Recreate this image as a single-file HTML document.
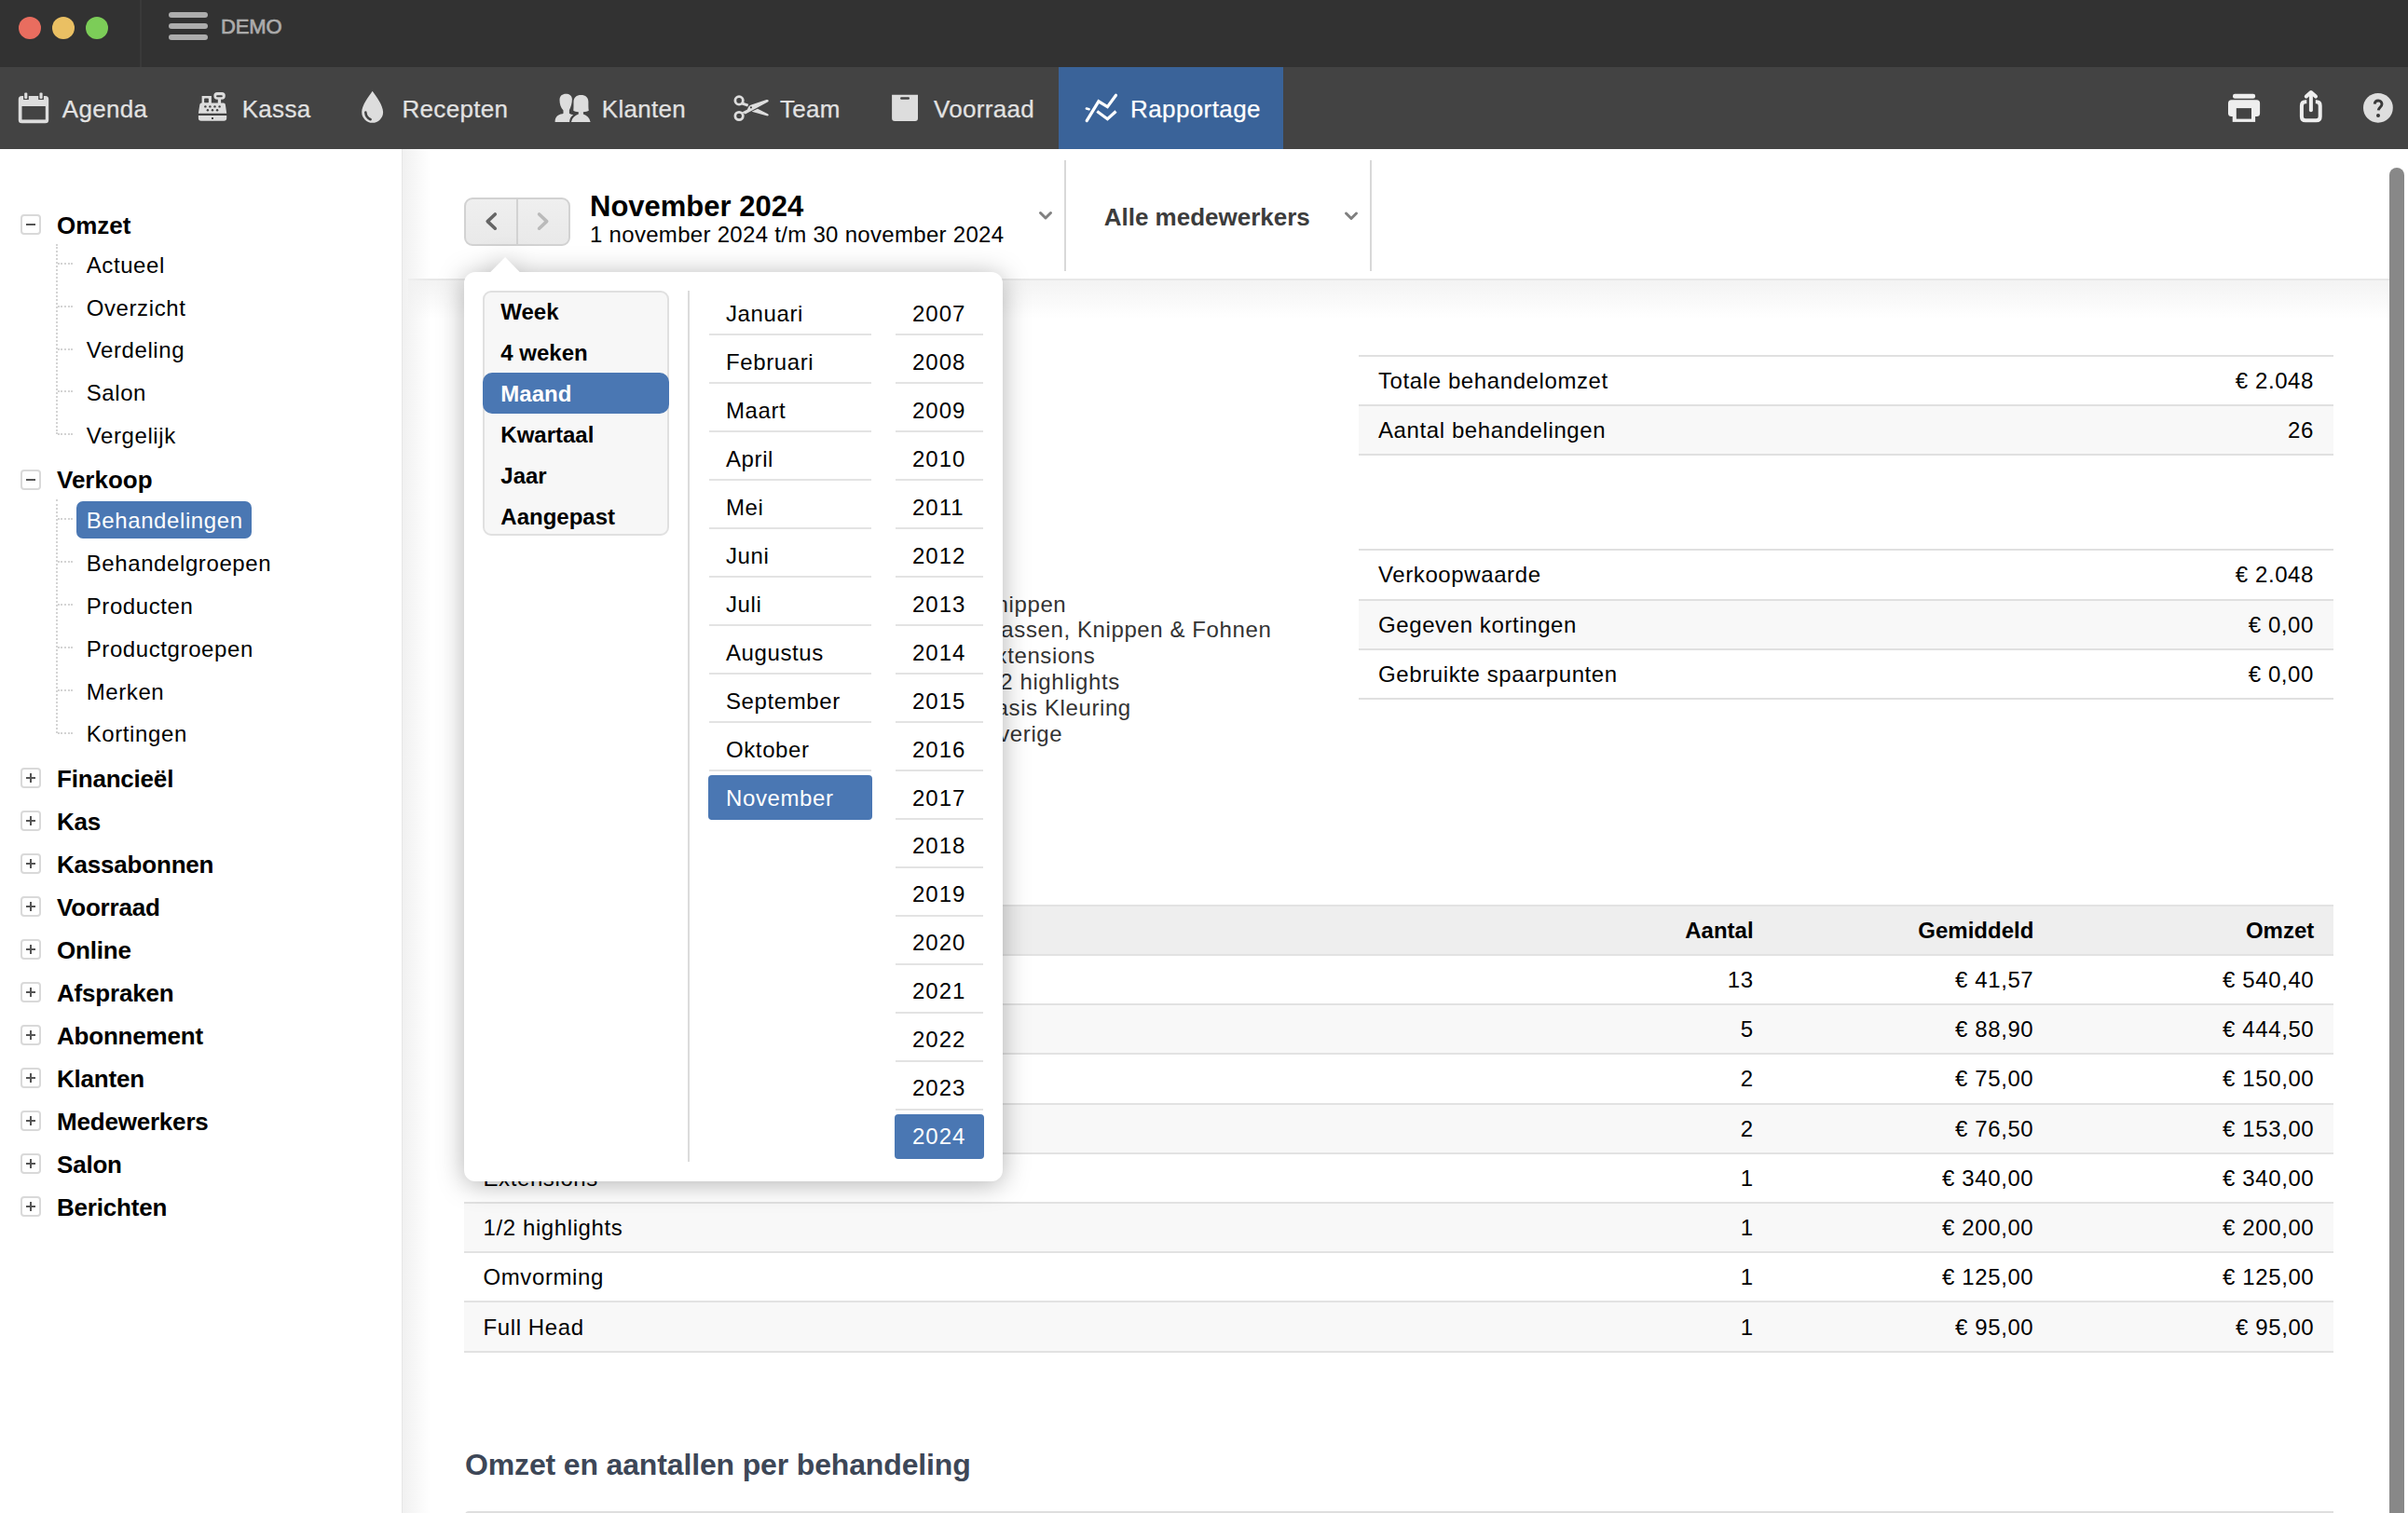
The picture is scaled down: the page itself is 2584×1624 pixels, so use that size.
<!DOCTYPE html><html><head><meta charset="utf-8"><style>
html,body{margin:0;padding:0;}
body{width:2584px;height:1624px;overflow:hidden;position:relative;background:#fff;font-family:"Liberation Sans", sans-serif;}
.t{position:absolute;white-space:nowrap;line-height:1;}
svg{position:absolute;}
</style></head><body>
<div style="position:absolute;left:0px;top:0px;width:2584px;height:72px;background:#323232;"></div>
<div style="position:absolute;left:20px;top:18px;width:24px;height:24px;background:#e96d5f;border-radius:50%;"></div>
<div style="position:absolute;left:56px;top:18px;width:24px;height:24px;background:#eac063;border-radius:50%;"></div>
<div style="position:absolute;left:92px;top:18px;width:24px;height:24px;background:#7ccd58;border-radius:50%;"></div>
<div style="position:absolute;left:150px;top:0px;width:2px;height:72px;background:#3a3a3a;"></div>
<div style="position:absolute;left:181px;top:12.9px;width:42px;height:6.2px;background:#adadad;border-radius:3.1px;"></div>
<div style="position:absolute;left:181px;top:24.9px;width:42px;height:6.2px;background:#adadad;border-radius:3.1px;"></div>
<div style="position:absolute;left:181px;top:37px;width:42px;height:6.2px;background:#adadad;border-radius:3.1px;"></div>
<div class="t" style="left:237.0px;top:17.7px;font-size:22px;font-weight:400;color:#acacac;-webkit-text-stroke:0.7px #acacac;letter-spacing:-0.1px;">DEMO</div>
<div style="position:absolute;left:0px;top:72px;width:2584px;height:88px;background:#434343;"></div>
<div style="position:absolute;left:1136px;top:72px;width:241px;height:88px;background:#3a6399;"></div>
<div class="t" style="left:66.8px;top:103.6px;font-size:26px;font-weight:400;color:#e2e2e2;letter-spacing:0.3px;-webkit-text-stroke:0.25px #e2e2e2;">Agenda</div>
<div class="t" style="left:259.7px;top:103.6px;font-size:26px;font-weight:400;color:#e2e2e2;letter-spacing:0.3px;-webkit-text-stroke:0.25px #e2e2e2;">Kassa</div>
<div class="t" style="left:431.5px;top:103.6px;font-size:26px;font-weight:400;color:#e2e2e2;letter-spacing:0.3px;-webkit-text-stroke:0.25px #e2e2e2;">Recepten</div>
<div class="t" style="left:645.8px;top:103.6px;font-size:26px;font-weight:400;color:#e2e2e2;letter-spacing:0.3px;-webkit-text-stroke:0.25px #e2e2e2;">Klanten</div>
<div class="t" style="left:837.0px;top:103.6px;font-size:26px;font-weight:400;color:#e2e2e2;letter-spacing:0.3px;-webkit-text-stroke:0.25px #e2e2e2;">Team</div>
<div class="t" style="left:1002.0px;top:103.6px;font-size:26px;font-weight:400;color:#e2e2e2;letter-spacing:0.3px;-webkit-text-stroke:0.25px #e2e2e2;">Voorraad</div>
<div class="t" style="left:1213.0px;top:103.6px;font-size:26px;font-weight:400;color:#fff;letter-spacing:0.4px;-webkit-text-stroke:0.25px #fff;">Rapportage</div>
<svg style="left:0;top:0;" width="2584" height="160" viewBox="0 0 2584 160">
<!-- calendar -->
<rect x="19.8" y="103" width="32.4" height="29.2" rx="3.5" fill="#dddddd"/>
<rect x="25.1" y="101" width="5.7" height="6" fill="#434343"/>
<rect x="41.2" y="101" width="5.7" height="6" fill="#434343"/>
<rect x="26.2" y="99.6" width="3.1" height="6.4" rx="1" fill="#dddddd"/>
<rect x="42.5" y="99.6" width="3.1" height="6.4" rx="1" fill="#dddddd"/>
<rect x="23.5" y="114" width="25.3" height="14.4" fill="#434343"/>
<!-- kassa -->
<rect x="229.4" y="99" width="12.4" height="7.7" rx="3.6" fill="#dddddd"/>
<rect x="232.1" y="102.2" width="6.7" height="2" rx="1" fill="#434343"/>
<rect x="233.8" y="106" width="3.3" height="5" fill="#dddddd"/>
<rect x="216.6" y="103" width="10.3" height="8" fill="#dddddd"/>
<rect x="219.1" y="105.6" width="4.8" height="5" rx="0.8" fill="#434343"/>
<path d="M216.3,110.4 L239.8,110.4 Q241.8,110.4 241.9,112.4 L243.2,121.8 L212.9,121.8 L214.3,112.4 Q214.5,110.4 216.3,110.4 Z" fill="#dddddd"/>
<g fill="#434343">
<circle cx="220.4" cy="114.4" r="1.2"/><circle cx="225.4" cy="114.4" r="1.2"/><circle cx="230.5" cy="114.4" r="1.2"/><circle cx="235.6" cy="114.4" r="1.2"/>
<circle cx="222.9" cy="118.2" r="1.2"/><circle cx="228" cy="118.2" r="1.2"/><circle cx="233.1" cy="118.2" r="1.2"/>
</g>
<path d="M212.9,124.1 L243.2,124.1 L243.2,126.7 Q243.2,129.7 240.2,129.7 L215.9,129.7 Q212.9,129.7 212.9,126.7 Z" fill="#dddddd"/>
<rect x="227" y="126" width="2" height="2" fill="#434343"/>
<!-- drop -->
<path d="M399.7,97.8 C396,103 388.2,113 388.2,120.3 A11.45,11.45 0 0 0 411.1,120.3 C411.1,113 403.4,103 399.7,97.8 Z" fill="#dddddd"/>
<path d="M392.3,120.6 Q392.8,126 397.6,128.2" stroke="#434343" stroke-width="2.6" fill="none" stroke-linecap="round"/>
<!-- klanten -->
<path d="M595.6,130.9 C595.6,126 598,123 603.5,122.3 L604.5,121.8 L604.5,118.5 C601.5,115.5 600.5,111 600.5,107.2 C600.5,102.8 603.5,100.7 607.2,100.7 C611,100.7 613.9,102.6 613.9,106.6 C613.9,111 612.6,115 610.9,118.2 L610.9,121.8 C612.2,122.6 613.5,123 615.2,123.3 C612.6,125 611.1,128 611.1,130.9 Z" fill="#dddddd"/>
<path d="M613,130.9 C614,126.5 617,124 620.8,122.6 L620.8,120.3 C618.5,120 616.2,119.5 615.3,118.8 C615.6,116 615.5,112 615.5,109.2 C615.5,104.6 618.6,101.9 623.5,101.9 C628.4,101.9 631.4,104.6 631.4,109.2 C631.4,112 631.3,116 631.8,118.8 C630.8,119.5 628.2,120 625.9,120.3 L625.9,122.6 C629.8,124 632.6,126.5 633.6,130.9 Z" fill="#dddddd"/>
<!-- scissors -->
<g transform="translate(782,96)">
<circle cx="11.1" cy="11.9" r="4.2" stroke="#dddddd" stroke-width="2.8" fill="none"/>
<circle cx="11.1" cy="28.5" r="4.2" stroke="#dddddd" stroke-width="2.8" fill="none"/>
<path d="M14.2,24.5 L20,21.5 C21,19 21.5,17.6 23.5,16.8 L40.5,11 C42.8,10.4 43.6,12.7 41.8,13.6 L17.8,26.6 Z" fill="#dddddd"/>
<path d="M14.6,13.6 L21.2,15.8 L20.2,18.6 L14,16.4 Z" fill="#dddddd"/>
<path d="M24.6,23.7 L31,20.8 L42,26.2 C43.6,27.1 42.6,29 40.6,28.3 Z" fill="#dddddd"/>
<circle cx="23.9" cy="19.3" r="1.1" fill="#434343"/>
</g>
<!-- voorraad -->
<path d="M957.1,101.8 L985,101.8 L985,127 Q985,130 982,130 L960.1,130 Q957.1,130 957.1,127 Z" fill="#dddddd"/>
<rect x="966.1" y="104.3" width="9.9" height="2.5" rx="1.25" fill="#434343"/>
<!-- chart -->
<g stroke="#fff" stroke-width="3.2" fill="none" stroke-linecap="round" stroke-linejoin="miter">
<path d="M1166.2,129.6 L1178.9,108.8 L1188.4,114.6 L1197.5,102.3"/>
<path d="M1177.3,119.5 L1188.4,127.7 L1197.5,119.5" stroke-linecap="butt"/>
<path d="M1165.9,116.6 L1168.6,117.2" stroke-width="2.6"/>
</g>
<!-- print -->
<g fill="#eeeeee">
<rect x="2396" y="100.8" width="24.1" height="5" rx="2.2"/>
<rect x="2391" y="107.3" width="34.1" height="17.7" rx="3.5"/>
<rect x="2395.7" y="115.9" width="24.4" height="15"/>
</g>
<rect x="2399.8" y="116.1" width="16.2" height="11.5" fill="#434343"/>
<!-- share -->
<g stroke="#eeeeee" stroke-width="4" fill="none">
<path d="M2475.3,109.3 L2474,109.3 Q2469.9,109.3 2469.9,113.4 L2469.9,125.2 Q2469.9,129.2 2474,129.2 L2485.6,129.2 Q2489.7,129.2 2489.7,125.2 L2489.7,113.4 Q2489.7,109.3 2485.6,109.3 L2484.8,109.3"/>
<path d="M2479.9,118.3 L2479.9,100" stroke-linecap="round"/>
<path d="M2474.8,103.6 L2479.9,99 L2485,103.6" stroke-linecap="round" stroke-linejoin="round"/>
</g>
<!-- help -->
<circle cx="2551.9" cy="115.8" r="15.9" fill="#dedede"/>
<path d="M2548.2,111.6 C2548.5,109.2 2550,108 2552.1,108 C2554.4,108 2556,109.7 2556,111.8 C2556,114.6 2552.6,115.4 2552.2,118.4" stroke="#3a3a3a" stroke-width="2.9" fill="none"/>
<circle cx="2552" cy="124" r="2" fill="#3a3a3a"/>
</svg>
<div style="position:absolute;left:0px;top:160px;width:431px;height:1464px;background:#fff;"></div>
<div style="position:absolute;left:22px;top:230px;width:18px;height:18px;border:2px solid #d9d9d9;border-radius:4px;background:#fff;"></div>
<div style="position:absolute;left:28px;top:240px;width:10px;height:2px;background:#555;"></div>
<div class="t" style="left:61.0px;top:229.0px;font-size:26px;font-weight:700;color:#000;">Omzet</div>
<div class="t" style="left:92.7px;top:272.7px;font-size:24px;font-weight:400;color:#000;letter-spacing:0.6px;">Actueel</div>
<div style="position:absolute;left:62px;top:282px;width:16px;height:0;border-top:2px dotted #d4d4d4;"></div>
<div class="t" style="left:92.7px;top:318.5px;font-size:24px;font-weight:400;color:#000;letter-spacing:0.6px;">Overzicht</div>
<div style="position:absolute;left:62px;top:327.8px;width:16px;height:0;border-top:2px dotted #d4d4d4;"></div>
<div class="t" style="left:92.7px;top:364.3px;font-size:24px;font-weight:400;color:#000;letter-spacing:0.6px;">Verdeling</div>
<div style="position:absolute;left:62px;top:373.6px;width:16px;height:0;border-top:2px dotted #d4d4d4;"></div>
<div class="t" style="left:92.7px;top:410.1px;font-size:24px;font-weight:400;color:#000;letter-spacing:0.6px;">Salon</div>
<div style="position:absolute;left:62px;top:419.4px;width:16px;height:0;border-top:2px dotted #d4d4d4;"></div>
<div class="t" style="left:92.7px;top:455.9px;font-size:24px;font-weight:400;color:#000;letter-spacing:0.6px;">Vergelijk</div>
<div style="position:absolute;left:62px;top:465.2px;width:16px;height:0;border-top:2px dotted #d4d4d4;"></div>
<div style="position:absolute;left:60px;top:262px;width:0;height:204.2px;border-left:2px dotted #d4d4d4;"></div>
<div style="position:absolute;left:22px;top:504px;width:18px;height:18px;border:2px solid #d9d9d9;border-radius:4px;background:#fff;"></div>
<div style="position:absolute;left:28px;top:514px;width:10px;height:2px;background:#555;"></div>
<div class="t" style="left:61.0px;top:502.0px;font-size:26px;font-weight:700;color:#000;">Verkoop</div>
<div style="position:absolute;left:82px;top:538px;width:188px;height:40px;background:#4a77b3;border-radius:7px;"></div>
<div class="t" style="left:92.7px;top:546.5px;font-size:24px;font-weight:400;color:#fff;letter-spacing:0.6px;">Behandelingen</div>
<div style="position:absolute;left:62px;top:555.8px;width:16px;height:0;border-top:2px dotted #d4d4d4;"></div>
<div class="t" style="left:92.7px;top:592.5px;font-size:24px;font-weight:400;color:#000;letter-spacing:0.6px;">Behandelgroepen</div>
<div style="position:absolute;left:62px;top:601.8px;width:16px;height:0;border-top:2px dotted #d4d4d4;"></div>
<div class="t" style="left:92.7px;top:638.5px;font-size:24px;font-weight:400;color:#000;letter-spacing:0.6px;">Producten</div>
<div style="position:absolute;left:62px;top:647.8px;width:16px;height:0;border-top:2px dotted #d4d4d4;"></div>
<div class="t" style="left:92.7px;top:684.5px;font-size:24px;font-weight:400;color:#000;letter-spacing:0.6px;">Productgroepen</div>
<div style="position:absolute;left:62px;top:693.8px;width:16px;height:0;border-top:2px dotted #d4d4d4;"></div>
<div class="t" style="left:92.7px;top:730.5px;font-size:24px;font-weight:400;color:#000;letter-spacing:0.6px;">Merken</div>
<div style="position:absolute;left:62px;top:739.8px;width:16px;height:0;border-top:2px dotted #d4d4d4;"></div>
<div class="t" style="left:92.7px;top:776.4px;font-size:24px;font-weight:400;color:#000;letter-spacing:0.6px;">Kortingen</div>
<div style="position:absolute;left:62px;top:785.7px;width:16px;height:0;border-top:2px dotted #d4d4d4;"></div>
<div style="position:absolute;left:60px;top:536px;width:0;height:250.70000000000005px;border-left:2px dotted #d4d4d4;"></div>
<div style="position:absolute;left:22px;top:824px;width:18px;height:18px;border:2px solid #d9d9d9;border-radius:4px;background:#fff;"></div>
<div style="position:absolute;left:28px;top:834px;width:10px;height:2px;background:#555;"></div>
<div style="position:absolute;left:32px;top:830px;width:2px;height:10px;background:#555;"></div>
<div class="t" style="left:61.0px;top:822.6px;font-size:26px;font-weight:700;color:#000;letter-spacing:-0.2px;">Financieël</div>
<div style="position:absolute;left:22px;top:870px;width:18px;height:18px;border:2px solid #d9d9d9;border-radius:4px;background:#fff;"></div>
<div style="position:absolute;left:28px;top:880px;width:10px;height:2px;background:#555;"></div>
<div style="position:absolute;left:32px;top:876px;width:2px;height:10px;background:#555;"></div>
<div class="t" style="left:61.0px;top:868.6px;font-size:26px;font-weight:700;color:#000;letter-spacing:-0.2px;">Kas</div>
<div style="position:absolute;left:22px;top:916px;width:18px;height:18px;border:2px solid #d9d9d9;border-radius:4px;background:#fff;"></div>
<div style="position:absolute;left:28px;top:926px;width:10px;height:2px;background:#555;"></div>
<div style="position:absolute;left:32px;top:922px;width:2px;height:10px;background:#555;"></div>
<div class="t" style="left:61.0px;top:914.7px;font-size:26px;font-weight:700;color:#000;letter-spacing:-0.2px;">Kassabonnen</div>
<div style="position:absolute;left:22px;top:962px;width:18px;height:18px;border:2px solid #d9d9d9;border-radius:4px;background:#fff;"></div>
<div style="position:absolute;left:28px;top:972px;width:10px;height:2px;background:#555;"></div>
<div style="position:absolute;left:32px;top:968px;width:2px;height:10px;background:#555;"></div>
<div class="t" style="left:61.0px;top:960.7px;font-size:26px;font-weight:700;color:#000;letter-spacing:-0.2px;">Voorraad</div>
<div style="position:absolute;left:22px;top:1008px;width:18px;height:18px;border:2px solid #d9d9d9;border-radius:4px;background:#fff;"></div>
<div style="position:absolute;left:28px;top:1018px;width:10px;height:2px;background:#555;"></div>
<div style="position:absolute;left:32px;top:1014px;width:2px;height:10px;background:#555;"></div>
<div class="t" style="left:61.0px;top:1006.8px;font-size:26px;font-weight:700;color:#000;letter-spacing:-0.2px;">Online</div>
<div style="position:absolute;left:22px;top:1054px;width:18px;height:18px;border:2px solid #d9d9d9;border-radius:4px;background:#fff;"></div>
<div style="position:absolute;left:28px;top:1064px;width:10px;height:2px;background:#555;"></div>
<div style="position:absolute;left:32px;top:1060px;width:2px;height:10px;background:#555;"></div>
<div class="t" style="left:61.0px;top:1052.8px;font-size:26px;font-weight:700;color:#000;letter-spacing:-0.2px;">Afspraken</div>
<div style="position:absolute;left:22px;top:1100px;width:18px;height:18px;border:2px solid #d9d9d9;border-radius:4px;background:#fff;"></div>
<div style="position:absolute;left:28px;top:1110px;width:10px;height:2px;background:#555;"></div>
<div style="position:absolute;left:32px;top:1106px;width:2px;height:10px;background:#555;"></div>
<div class="t" style="left:61.0px;top:1098.8px;font-size:26px;font-weight:700;color:#000;letter-spacing:-0.2px;">Abonnement</div>
<div style="position:absolute;left:22px;top:1146px;width:18px;height:18px;border:2px solid #d9d9d9;border-radius:4px;background:#fff;"></div>
<div style="position:absolute;left:28px;top:1156px;width:10px;height:2px;background:#555;"></div>
<div style="position:absolute;left:32px;top:1152px;width:2px;height:10px;background:#555;"></div>
<div class="t" style="left:61.0px;top:1144.9px;font-size:26px;font-weight:700;color:#000;letter-spacing:-0.2px;">Klanten</div>
<div style="position:absolute;left:22px;top:1192px;width:18px;height:18px;border:2px solid #d9d9d9;border-radius:4px;background:#fff;"></div>
<div style="position:absolute;left:28px;top:1202px;width:10px;height:2px;background:#555;"></div>
<div style="position:absolute;left:32px;top:1198px;width:2px;height:10px;background:#555;"></div>
<div class="t" style="left:61.0px;top:1190.9px;font-size:26px;font-weight:700;color:#000;letter-spacing:-0.2px;">Medewerkers</div>
<div style="position:absolute;left:22px;top:1238px;width:18px;height:18px;border:2px solid #d9d9d9;border-radius:4px;background:#fff;"></div>
<div style="position:absolute;left:28px;top:1248px;width:10px;height:2px;background:#555;"></div>
<div style="position:absolute;left:32px;top:1244px;width:2px;height:10px;background:#555;"></div>
<div class="t" style="left:61.0px;top:1237.0px;font-size:26px;font-weight:700;color:#000;letter-spacing:-0.2px;">Salon</div>
<div style="position:absolute;left:22px;top:1284px;width:18px;height:18px;border:2px solid #d9d9d9;border-radius:4px;background:#fff;"></div>
<div style="position:absolute;left:28px;top:1294px;width:10px;height:2px;background:#555;"></div>
<div style="position:absolute;left:32px;top:1290px;width:2px;height:10px;background:#555;"></div>
<div class="t" style="left:61.0px;top:1283.0px;font-size:26px;font-weight:700;color:#000;letter-spacing:-0.2px;">Berichten</div>
<div style="position:absolute;left:431px;top:160px;width:2133px;height:1464px;background:#fff;"></div>
<div style="position:absolute;left:438px;top:160px;width:2126px;height:140px;background:#fff;"></div>
<div style="position:absolute;left:438px;top:299px;width:2126px;height:2px;background:#e8e8e8;"></div>
<div style="position:absolute;left:438px;top:301px;width:2126px;height:41px;background:linear-gradient(to bottom,#f3f3f3,rgba(255,255,255,0));"></div>
<div style="position:absolute;left:431px;top:160px;width:31px;height:1464px;background:linear-gradient(to right,#f0f0f0,rgba(255,255,255,0));"></div>
<div style="position:absolute;left:431px;top:160px;width:1px;height:1464px;background:#e6e6e6;"></div>
<div style="position:absolute;left:498px;top:212px;width:110px;height:48px;border:2px solid #d2d2d2;border-radius:9px;background:linear-gradient(#efefef,#e9e9e9);"></div>
<div style="position:absolute;left:554px;top:214px;width:2px;height:48px;background:#d2d2d2;"></div>
<div class="t" style="left:633.0px;top:205.8px;font-size:31px;font-weight:700;color:#000;">November 2024</div>
<div class="t" style="left:633.0px;top:240.0px;font-size:24px;font-weight:400;color:#000;letter-spacing:0.3px;">1 november 2024 t/m 30 november 2024</div>
<div style="position:absolute;left:1142px;top:172px;width:2px;height:119px;background:#d8d8d8;"></div>
<div style="position:absolute;left:1470px;top:172px;width:2px;height:119px;background:#d8d8d8;"></div>
<div class="t" style="left:1184.7px;top:220.4px;font-size:26px;font-weight:700;color:#3c3c3c;">Alle medewerkers</div>
<svg style="left:0;top:0;" width="2584" height="300" viewBox="0 0 2584 300">
<path d="M531.3,230 L523.2,237.6 L531.3,245.2" stroke="#666" stroke-width="3.6" fill="none" stroke-linecap="round" stroke-linejoin="round"/>
<path d="M578.6,230 L586.7,237.6 L578.6,245.2" stroke="#bababa" stroke-width="3.6" fill="none" stroke-linecap="round" stroke-linejoin="round"/>
<path d="M1116.5,228.5 L1122,234 L1127.5,228.5" stroke="#808080" stroke-width="3" fill="none" stroke-linecap="round" stroke-linejoin="round"/>
<path d="M1444.5,229 L1450,234.5 L1455.5,229" stroke="#808080" stroke-width="3" fill="none" stroke-linecap="round" stroke-linejoin="round"/>
</svg>
<div style="position:absolute;left:1458px;top:381px;width:1046px;height:53px;background:#fff;"></div>
<div class="t" style="left:1479.0px;top:396.7px;font-size:24px;font-weight:400;color:#000;letter-spacing:0.6px;">Totale behandelomzet</div>
<div class="t" style="right:101.0px;top:396.7px;font-size:24px;font-weight:400;color:#000;letter-spacing:0.6px;">€ 2.048</div>
<div style="position:absolute;left:1458px;top:434px;width:1046px;height:53px;background:#f8f8f8;"></div>
<div class="t" style="left:1479.0px;top:449.7px;font-size:24px;font-weight:400;color:#000;letter-spacing:0.6px;">Aantal behandelingen</div>
<div class="t" style="right:101.0px;top:449.7px;font-size:24px;font-weight:400;color:#000;letter-spacing:0.6px;">26</div>
<div style="position:absolute;left:1458px;top:381px;width:1046px;height:2px;background:#e0e0e0;"></div>
<div style="position:absolute;left:1458px;top:434px;width:1046px;height:2px;background:#e0e0e0;"></div>
<div style="position:absolute;left:1458px;top:487px;width:1046px;height:2px;background:#e0e0e0;"></div>
<div style="position:absolute;left:1458px;top:590px;width:1046px;height:54px;background:#fff;"></div>
<div class="t" style="left:1479.0px;top:604.7px;font-size:24px;font-weight:400;color:#000;letter-spacing:0.6px;">Verkoopwaarde</div>
<div class="t" style="right:101.0px;top:604.7px;font-size:24px;font-weight:400;color:#000;letter-spacing:0.6px;">€ 2.048</div>
<div style="position:absolute;left:1458px;top:644px;width:1046px;height:53px;background:#f8f8f8;"></div>
<div class="t" style="left:1479.0px;top:658.7px;font-size:24px;font-weight:400;color:#000;letter-spacing:0.6px;">Gegeven kortingen</div>
<div class="t" style="right:101.0px;top:658.7px;font-size:24px;font-weight:400;color:#000;letter-spacing:0.6px;">€ 0,00</div>
<div style="position:absolute;left:1458px;top:697px;width:1046px;height:53px;background:#fff;"></div>
<div class="t" style="left:1479.0px;top:711.7px;font-size:24px;font-weight:400;color:#000;letter-spacing:0.6px;">Gebruikte spaarpunten</div>
<div class="t" style="right:101.0px;top:711.7px;font-size:24px;font-weight:400;color:#000;letter-spacing:0.6px;">€ 0,00</div>
<div style="position:absolute;left:1458px;top:589px;width:1046px;height:2px;background:#e0e0e0;"></div>
<div style="position:absolute;left:1458px;top:643px;width:1046px;height:2px;background:#e0e0e0;"></div>
<div style="position:absolute;left:1458px;top:696px;width:1046px;height:2px;background:#e0e0e0;"></div>
<div style="position:absolute;left:1458px;top:749px;width:1046px;height:2px;background:#e0e0e0;"></div>
<div class="t" style="left:1052.0px;top:636.5px;font-size:24px;font-weight:400;color:#333;letter-spacing:0.6px;">Knippen</div>
<div class="t" style="left:1052.0px;top:664.3px;font-size:24px;font-weight:400;color:#333;letter-spacing:0.6px;">Wassen, Knippen &amp; Fohnen</div>
<div class="t" style="left:1052.0px;top:692.1px;font-size:24px;font-weight:400;color:#333;letter-spacing:0.6px;">Extensions</div>
<div class="t" style="left:1052.0px;top:719.9px;font-size:24px;font-weight:400;color:#333;letter-spacing:0.6px;">1/2 highlights</div>
<div class="t" style="left:1052.0px;top:747.7px;font-size:24px;font-weight:400;color:#333;letter-spacing:0.6px;">Basis Kleuring</div>
<div class="t" style="left:1052.0px;top:775.5px;font-size:24px;font-weight:400;color:#333;letter-spacing:0.6px;">Overige</div>
<div style="position:absolute;left:498px;top:971px;width:2006px;height:53px;background:#eeeeee;"></div>
<div class="t" style="right:702.4px;top:986.7px;font-size:24px;font-weight:700;color:#000;">Aantal</div>
<div class="t" style="right:401.7px;top:986.7px;font-size:24px;font-weight:700;color:#000;">Gemiddeld</div>
<div class="t" style="right:100.7px;top:986.7px;font-size:24px;font-weight:700;color:#000;">Omzet</div>
<div style="position:absolute;left:498px;top:1024px;width:2006px;height:53px;background:#fff;"></div>
<div class="t" style="left:518.5px;top:1039.6px;font-size:24px;font-weight:400;color:#000;letter-spacing:0.6px;">Knippen</div>
<div class="t" style="right:702.4px;top:1039.6px;font-size:24px;font-weight:400;color:#000;letter-spacing:0.6px;">13</div>
<div class="t" style="right:401.7px;top:1039.6px;font-size:24px;font-weight:400;color:#000;letter-spacing:0.6px;">€ 41,57</div>
<div class="t" style="right:100.7px;top:1039.6px;font-size:24px;font-weight:400;color:#000;letter-spacing:0.6px;">€ 540,40</div>
<div style="position:absolute;left:498px;top:1077px;width:2006px;height:53px;background:#f8f8f8;"></div>
<div class="t" style="left:518.5px;top:1092.9px;font-size:24px;font-weight:400;color:#000;letter-spacing:0.6px;">Wassen, Knippen &amp; Fohnen</div>
<div class="t" style="right:702.4px;top:1092.9px;font-size:24px;font-weight:400;color:#000;letter-spacing:0.6px;">5</div>
<div class="t" style="right:401.7px;top:1092.9px;font-size:24px;font-weight:400;color:#000;letter-spacing:0.6px;">€ 88,90</div>
<div class="t" style="right:100.7px;top:1092.9px;font-size:24px;font-weight:400;color:#000;letter-spacing:0.6px;">€ 444,50</div>
<div style="position:absolute;left:498px;top:1130px;width:2006px;height:54px;background:#fff;"></div>
<div class="t" style="left:518.5px;top:1146.2px;font-size:24px;font-weight:400;color:#000;letter-spacing:0.6px;">Basis Kleuring</div>
<div class="t" style="right:702.4px;top:1146.2px;font-size:24px;font-weight:400;color:#000;letter-spacing:0.6px;">2</div>
<div class="t" style="right:401.7px;top:1146.2px;font-size:24px;font-weight:400;color:#000;letter-spacing:0.6px;">€ 75,00</div>
<div class="t" style="right:100.7px;top:1146.2px;font-size:24px;font-weight:400;color:#000;letter-spacing:0.6px;">€ 150,00</div>
<div style="position:absolute;left:498px;top:1184px;width:2006px;height:53px;background:#f8f8f8;"></div>
<div class="t" style="left:518.5px;top:1199.5px;font-size:24px;font-weight:400;color:#000;letter-spacing:0.6px;">Overige</div>
<div class="t" style="right:702.4px;top:1199.5px;font-size:24px;font-weight:400;color:#000;letter-spacing:0.6px;">2</div>
<div class="t" style="right:401.7px;top:1199.5px;font-size:24px;font-weight:400;color:#000;letter-spacing:0.6px;">€ 76,50</div>
<div class="t" style="right:100.7px;top:1199.5px;font-size:24px;font-weight:400;color:#000;letter-spacing:0.6px;">€ 153,00</div>
<div style="position:absolute;left:498px;top:1237px;width:2006px;height:53px;background:#fff;"></div>
<div class="t" style="left:518.5px;top:1252.8px;font-size:24px;font-weight:400;color:#000;letter-spacing:0.6px;">Extensions</div>
<div class="t" style="right:702.4px;top:1252.8px;font-size:24px;font-weight:400;color:#000;letter-spacing:0.6px;">1</div>
<div class="t" style="right:401.7px;top:1252.8px;font-size:24px;font-weight:400;color:#000;letter-spacing:0.6px;">€ 340,00</div>
<div class="t" style="right:100.7px;top:1252.8px;font-size:24px;font-weight:400;color:#000;letter-spacing:0.6px;">€ 340,00</div>
<div style="position:absolute;left:498px;top:1290px;width:2006px;height:53px;background:#f8f8f8;"></div>
<div class="t" style="left:518.5px;top:1306.1px;font-size:24px;font-weight:400;color:#000;letter-spacing:0.6px;">1/2 highlights</div>
<div class="t" style="right:702.4px;top:1306.1px;font-size:24px;font-weight:400;color:#000;letter-spacing:0.6px;">1</div>
<div class="t" style="right:401.7px;top:1306.1px;font-size:24px;font-weight:400;color:#000;letter-spacing:0.6px;">€ 200,00</div>
<div class="t" style="right:100.7px;top:1306.1px;font-size:24px;font-weight:400;color:#000;letter-spacing:0.6px;">€ 200,00</div>
<div style="position:absolute;left:498px;top:1343px;width:2006px;height:53px;background:#fff;"></div>
<div class="t" style="left:518.5px;top:1359.4px;font-size:24px;font-weight:400;color:#000;letter-spacing:0.6px;">Omvorming</div>
<div class="t" style="right:702.4px;top:1359.4px;font-size:24px;font-weight:400;color:#000;letter-spacing:0.6px;">1</div>
<div class="t" style="right:401.7px;top:1359.4px;font-size:24px;font-weight:400;color:#000;letter-spacing:0.6px;">€ 125,00</div>
<div class="t" style="right:100.7px;top:1359.4px;font-size:24px;font-weight:400;color:#000;letter-spacing:0.6px;">€ 125,00</div>
<div style="position:absolute;left:498px;top:1396px;width:2006px;height:54px;background:#f8f8f8;"></div>
<div class="t" style="left:518.5px;top:1412.7px;font-size:24px;font-weight:400;color:#000;letter-spacing:0.6px;">Full Head</div>
<div class="t" style="right:702.4px;top:1412.7px;font-size:24px;font-weight:400;color:#000;letter-spacing:0.6px;">1</div>
<div class="t" style="right:401.7px;top:1412.7px;font-size:24px;font-weight:400;color:#000;letter-spacing:0.6px;">€ 95,00</div>
<div class="t" style="right:100.7px;top:1412.7px;font-size:24px;font-weight:400;color:#000;letter-spacing:0.6px;">€ 95,00</div>
<div style="position:absolute;left:498px;top:971px;width:2006px;height:2px;background:#e2e2e2;"></div>
<div style="position:absolute;left:498px;top:1024px;width:2006px;height:2px;background:#e2e2e2;"></div>
<div style="position:absolute;left:498px;top:1077px;width:2006px;height:2px;background:#e2e2e2;"></div>
<div style="position:absolute;left:498px;top:1130px;width:2006px;height:2px;background:#e2e2e2;"></div>
<div style="position:absolute;left:498px;top:1184px;width:2006px;height:2px;background:#e2e2e2;"></div>
<div style="position:absolute;left:498px;top:1237px;width:2006px;height:2px;background:#e2e2e2;"></div>
<div style="position:absolute;left:498px;top:1290px;width:2006px;height:2px;background:#e2e2e2;"></div>
<div style="position:absolute;left:498px;top:1343px;width:2006px;height:2px;background:#e2e2e2;"></div>
<div style="position:absolute;left:498px;top:1396px;width:2006px;height:2px;background:#e2e2e2;"></div>
<div style="position:absolute;left:498px;top:1450px;width:2006px;height:2px;background:#e2e2e2;"></div>
<div class="t" style="left:499.0px;top:1555.9px;font-size:32px;font-weight:700;color:#3d4757;letter-spacing:-0.15px;">Omzet en aantallen per behandeling</div>
<div style="position:absolute;left:499px;top:1622px;width:2001px;height:40px;border:2px solid #dedede;border-radius:4px 0 0 0;"></div>
<div style="position:absolute;left:0;top:0;width:2584px;height:1624px;filter:drop-shadow(0 3px 14px rgba(0,0,0,0.3));"><div style="position:absolute;left:498px;top:292px;width:578px;height:976px;background:#fff;border-radius:12px;"></div><svg style="left:498px;top:270px;" width="80" height="30" viewBox="498 270 80 30"><path d="M525.8,292.5 L542.1,275.9 L558.2,292.5 Z" fill="#fff"/></svg></div>
<div style="position:absolute;left:518px;top:312px;width:196px;height:259px;background:#f7f7f7;border:2px solid #e0e0e0;border-radius:9px;"></div>
<div style="position:absolute;left:518px;top:400px;width:200px;height:44px;background:#4a77b3;border-radius:10px;"></div>
<div class="t" style="left:537.3px;top:322.5px;font-size:24px;font-weight:700;color:#000;">Week</div>
<div class="t" style="left:537.3px;top:366.5px;font-size:24px;font-weight:700;color:#000;">4 weken</div>
<div class="t" style="left:537.3px;top:410.5px;font-size:24px;font-weight:700;color:#fff;">Maand</div>
<div class="t" style="left:537.3px;top:454.5px;font-size:24px;font-weight:700;color:#000;">Kwartaal</div>
<div class="t" style="left:537.3px;top:498.5px;font-size:24px;font-weight:700;color:#000;">Jaar</div>
<div class="t" style="left:537.3px;top:542.5px;font-size:24px;font-weight:700;color:#000;">Aangepast</div>
<div style="position:absolute;left:738px;top:312px;width:2px;height:935px;background:#dcdcdc;"></div>
<div style="position:absolute;left:761px;top:358px;width:174px;height:2px;background:#e3e3e3;"></div>
<div class="t" style="left:779.0px;top:324.9px;font-size:24px;font-weight:400;color:#000;letter-spacing:0.6px;">Januari</div>
<div style="position:absolute;left:761px;top:410px;width:174px;height:2px;background:#e3e3e3;"></div>
<div class="t" style="left:779.0px;top:376.8px;font-size:24px;font-weight:400;color:#000;letter-spacing:0.6px;">Februari</div>
<div style="position:absolute;left:761px;top:462px;width:174px;height:2px;background:#e3e3e3;"></div>
<div class="t" style="left:779.0px;top:428.8px;font-size:24px;font-weight:400;color:#000;letter-spacing:0.6px;">Maart</div>
<div style="position:absolute;left:761px;top:514px;width:174px;height:2px;background:#e3e3e3;"></div>
<div class="t" style="left:779.0px;top:480.8px;font-size:24px;font-weight:400;color:#000;letter-spacing:0.6px;">April</div>
<div style="position:absolute;left:761px;top:566px;width:174px;height:2px;background:#e3e3e3;"></div>
<div class="t" style="left:779.0px;top:532.7px;font-size:24px;font-weight:400;color:#000;letter-spacing:0.6px;">Mei</div>
<div style="position:absolute;left:761px;top:618px;width:174px;height:2px;background:#e3e3e3;"></div>
<div class="t" style="left:779.0px;top:584.7px;font-size:24px;font-weight:400;color:#000;letter-spacing:0.6px;">Juni</div>
<div style="position:absolute;left:761px;top:670px;width:174px;height:2px;background:#e3e3e3;"></div>
<div class="t" style="left:779.0px;top:636.6px;font-size:24px;font-weight:400;color:#000;letter-spacing:0.6px;">Juli</div>
<div style="position:absolute;left:761px;top:722px;width:174px;height:2px;background:#e3e3e3;"></div>
<div class="t" style="left:779.0px;top:688.6px;font-size:24px;font-weight:400;color:#000;letter-spacing:0.6px;">Augustus</div>
<div style="position:absolute;left:761px;top:774px;width:174px;height:2px;background:#e3e3e3;"></div>
<div class="t" style="left:779.0px;top:740.6px;font-size:24px;font-weight:400;color:#000;letter-spacing:0.6px;">September</div>
<div style="position:absolute;left:761px;top:826px;width:174px;height:2px;background:#e3e3e3;"></div>
<div class="t" style="left:779.0px;top:792.5px;font-size:24px;font-weight:400;color:#000;letter-spacing:0.6px;">Oktober</div>
<div style="position:absolute;left:760px;top:832px;width:176px;height:48px;background:#4a77b3;border-radius:4px;"></div>
<div class="t" style="left:779.0px;top:844.5px;font-size:24px;font-weight:400;color:#fff;letter-spacing:0.6px;">November</div>
<div style="position:absolute;left:961px;top:358px;width:94px;height:2px;background:#e3e3e3;"></div>
<div class="t" style="left:979.0px;top:324.9px;font-size:24px;font-weight:400;color:#000;letter-spacing:1px;">2007</div>
<div style="position:absolute;left:961px;top:410px;width:94px;height:2px;background:#e3e3e3;"></div>
<div class="t" style="left:979.0px;top:376.8px;font-size:24px;font-weight:400;color:#000;letter-spacing:1px;">2008</div>
<div style="position:absolute;left:961px;top:462px;width:94px;height:2px;background:#e3e3e3;"></div>
<div class="t" style="left:979.0px;top:428.8px;font-size:24px;font-weight:400;color:#000;letter-spacing:1px;">2009</div>
<div style="position:absolute;left:961px;top:514px;width:94px;height:2px;background:#e3e3e3;"></div>
<div class="t" style="left:979.0px;top:480.8px;font-size:24px;font-weight:400;color:#000;letter-spacing:1px;">2010</div>
<div style="position:absolute;left:961px;top:566px;width:94px;height:2px;background:#e3e3e3;"></div>
<div class="t" style="left:979.0px;top:532.7px;font-size:24px;font-weight:400;color:#000;letter-spacing:1px;">2011</div>
<div style="position:absolute;left:961px;top:618px;width:94px;height:2px;background:#e3e3e3;"></div>
<div class="t" style="left:979.0px;top:584.7px;font-size:24px;font-weight:400;color:#000;letter-spacing:1px;">2012</div>
<div style="position:absolute;left:961px;top:670px;width:94px;height:2px;background:#e3e3e3;"></div>
<div class="t" style="left:979.0px;top:636.6px;font-size:24px;font-weight:400;color:#000;letter-spacing:1px;">2013</div>
<div style="position:absolute;left:961px;top:722px;width:94px;height:2px;background:#e3e3e3;"></div>
<div class="t" style="left:979.0px;top:688.6px;font-size:24px;font-weight:400;color:#000;letter-spacing:1px;">2014</div>
<div style="position:absolute;left:961px;top:774px;width:94px;height:2px;background:#e3e3e3;"></div>
<div class="t" style="left:979.0px;top:740.6px;font-size:24px;font-weight:400;color:#000;letter-spacing:1px;">2015</div>
<div style="position:absolute;left:961px;top:826px;width:94px;height:2px;background:#e3e3e3;"></div>
<div class="t" style="left:979.0px;top:792.5px;font-size:24px;font-weight:400;color:#000;letter-spacing:1px;">2016</div>
<div style="position:absolute;left:961px;top:878px;width:94px;height:2px;background:#e3e3e3;"></div>
<div class="t" style="left:979.0px;top:844.5px;font-size:24px;font-weight:400;color:#000;letter-spacing:1px;">2017</div>
<div style="position:absolute;left:961px;top:930px;width:94px;height:2px;background:#e3e3e3;"></div>
<div class="t" style="left:979.0px;top:896.4px;font-size:24px;font-weight:400;color:#000;letter-spacing:1px;">2018</div>
<div style="position:absolute;left:961px;top:982px;width:94px;height:2px;background:#e3e3e3;"></div>
<div class="t" style="left:979.0px;top:948.4px;font-size:24px;font-weight:400;color:#000;letter-spacing:1px;">2019</div>
<div style="position:absolute;left:961px;top:1034px;width:94px;height:2px;background:#e3e3e3;"></div>
<div class="t" style="left:979.0px;top:1000.4px;font-size:24px;font-weight:400;color:#000;letter-spacing:1px;">2020</div>
<div style="position:absolute;left:961px;top:1086px;width:94px;height:2px;background:#e3e3e3;"></div>
<div class="t" style="left:979.0px;top:1052.3px;font-size:24px;font-weight:400;color:#000;letter-spacing:1px;">2021</div>
<div style="position:absolute;left:961px;top:1138px;width:94px;height:2px;background:#e3e3e3;"></div>
<div class="t" style="left:979.0px;top:1104.3px;font-size:24px;font-weight:400;color:#000;letter-spacing:1px;">2022</div>
<div style="position:absolute;left:961px;top:1190px;width:94px;height:2px;background:#e3e3e3;"></div>
<div class="t" style="left:979.0px;top:1156.2px;font-size:24px;font-weight:400;color:#000;letter-spacing:1px;">2023</div>
<div style="position:absolute;left:960px;top:1196px;width:96px;height:48px;background:#4a77b3;border-radius:4px;"></div>
<div class="t" style="left:979.0px;top:1208.2px;font-size:24px;font-weight:400;color:#fff;letter-spacing:1px;">2024</div>
<div style="position:absolute;left:2564px;top:180px;width:16px;height:1454px;background:#888;border-radius:8px;"></div>
</body></html>
